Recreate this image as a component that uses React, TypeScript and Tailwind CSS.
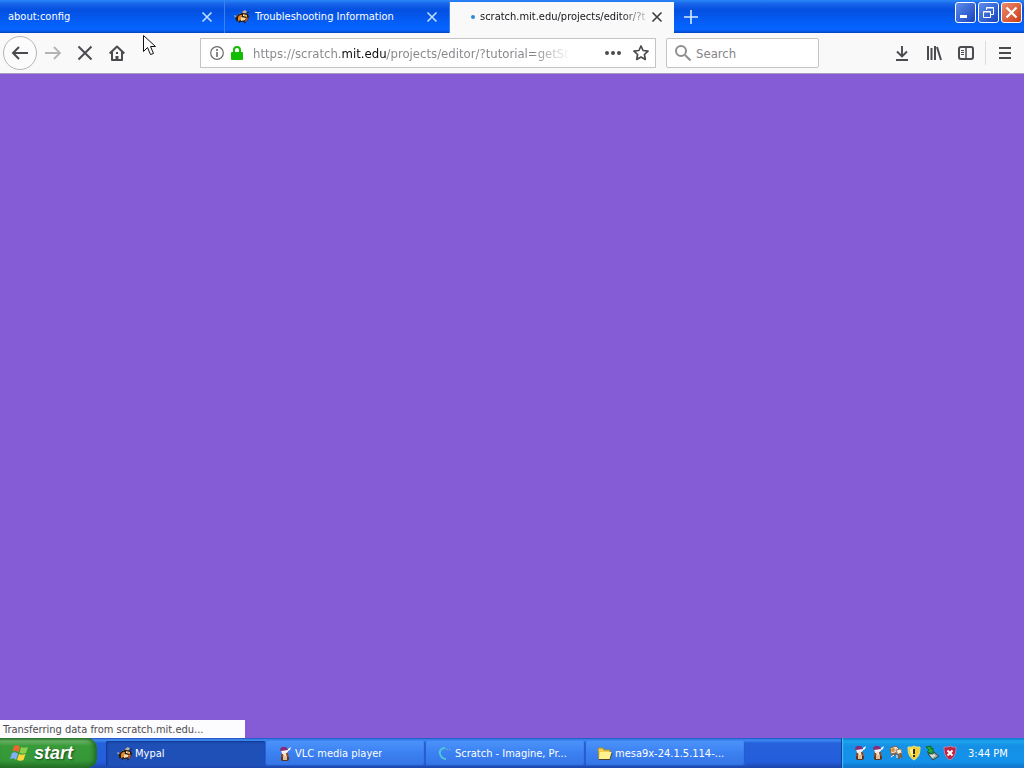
import React, { useState } from 'react'
import clsx from 'clsx'

interface Tab {
    id: string;
    title: string;
    icon?: 'bee' | 'loading';
}

interface Task {
    id: string;
    title: string;
    icon: React.ReactNode;
}

const BeeIcon = () => (
    <svg width="16" height="16" viewBox="0 0 16 16" className="shrink-0" aria-hidden="true">
        <path d="M0 6l3 1 3-3 3 3-4 3-4-1z" fill="#8fa6c0" />
        <path d="M8 3l3-2 2 2-3 2z" fill="#c7b493" />
        <path d="M1 9l4-4 4-1 5 1 1 3-2 4-5 1-5-1z" fill="#2b1a0c" />
        <path d="M4 8l2-2h2l-1 5-3 1z" fill="#e0862a" />
        <path d="M9 5l4 1v2l-4-1z" fill="#f0b062" />
        <path d="M7 8l5 1-1 2-4 1z" fill="#f7dfb0" />
        <path d="M12 8l2 1-1 3-2 1z" fill="#c0501c" />
        <path d="M2 12l2-1M5 14l1-2M10 14l2-1M13 4l2-1" stroke="#20180f" />
        <path d="M9 6h1v1H9z" fill="#fff" />
    </svg>
)

const VlcIcon = () => (
    <svg width="16" height="16" viewBox="0 0 16 16" className="shrink-0" aria-hidden="true">
        <path d="M5 6h5l1 5H5z" fill="#f3e6d4" />
        <path d="M4 8h2l1 3-3 3zM9 7h2l1 6-2 1z" fill="#8d4a22" />
        <path d="M4 11h8v3l-2 1H5l-1-1z" fill="#5c361e" />
        <path d="M6 10h4v4H6z" fill="#e0bf9c" />
        <path d="M3 3l2-2h4l2 3-7 2z" fill="#8a2a72" />
        <path d="M4 5l7-1v2l-6 1z" fill="#f7f3fa" />
        <path d="M11 3l3-2-1 3-2 1z" fill="#fff" />
    </svg>
)

const ScratchIcon = () => (
    <svg width="16" height="16" viewBox="0 0 16 16" className="shrink-0" fill="none" aria-hidden="true">
        <path d="M8 2C4 2 2 5 3 8c1 3 3 5 6 5" stroke="#4fc6d8" strokeWidth="2" />
        <path d="M8 2l3 2M12 3l2 1" stroke="#62a8d8" />
    </svg>
)

const FolderIcon = () => (
    <svg width="16" height="16" viewBox="0 0 16 16" className="shrink-0" aria-hidden="true">
        <path d="M1 3l1-1h4l1 2h6v9H2z" fill="#f0cf52" stroke="#a88c2a" />
        <path d="M3 6h12l-2 7H2z" fill="#fdf28f" />
        <path d="M2 13.500h11l2-7" stroke="#4c452c" fill="none" />
    </svg>
)

const KeysIcon = () => (
    <svg width="16" height="16" viewBox="0 0 16 16" className="shrink-0" aria-hidden="true">
        <path d="M2 3l6-2 3 3-2 4-6 1z" fill="#e6dcc4" stroke="#75664b" />
        <circle cx="5" cy="5" r="2" fill="#d98e3b" />
        <path d="M8 5l5-1 1 4-4 2z" fill="#f2efe5" stroke="#97836a" />
        <path d="M4 11l4-3M10 9l1 5M12 8l2 5" stroke="#8a5a34" strokeWidth="2" />
        <path d="M3 12l3-2M9 10v3" stroke="#fff" />
    </svg>
)

const UpdateShieldIcon = () => (
    <svg width="16" height="16" viewBox="0 0 16 16" className="shrink-0" aria-hidden="true">
        <path d="M8 1l2 1h4c0 6-1 10-6 13C3 12 2 8 2 2h4z" fill="#f6d02a" stroke="#e6e08e" />
        <path d="M4 4l3-1v9C5 10 4 8 4 4z" fill="#fff08b" />
        <path d="M7 4h2v5H7zM7 10h2v2H7z" fill="#2d2a16" />
    </svg>
)

const DeviceIcon = () => (
    <svg width="16" height="16" viewBox="0 0 16 16" className="shrink-0" aria-hidden="true">
        <path d="M4 9l6-2 5 4-6 4z" fill="#8e9c98" stroke="#344645" />
        <path d="M6 10l4-1 2 2-4 2z" fill="#d4dedb" />
        <path d="M2 2l5-1v3l2-1v6L3 7l2-2z" fill="#22a83c" stroke="#126928" />
    </svg>
)

const AlertShieldIcon = () => (
    <svg width="16" height="16" viewBox="0 0 16 16" className="shrink-0" aria-hidden="true">
        <path d="M8 1l2 1h4c0 6-1 10-6 13C3 12 2 8 2 2h4z" fill="#c2213f" stroke="#b08ab0" />
        <path d="M5.500 5.500l5 5M10.500 5.500l-5 5" stroke="#fff" strokeWidth="2" />
    </svg>
)

const WindowsFlag = () => (
    <svg width="20" height="20" viewBox="0 0 20 20" className="shrink-0" aria-hidden="true">
        <path d="M4 3c2-1 4-1 6 1L8.500 9.500c-2-2-4-2-6-1z" fill="#f0642f" />
        <path d="M11 4c2 1 4 1 7 0l-2 6c-3 1-4 1-6.500 0z" fill="#8ad04c" />
        <path d="M2 10c2-1 4-1 6 1l-2 6c-2-2-3-2-6-1z" fill="#84aef8" />
        <path d="M9 11c2 1 4 1 6.500 0l-2 6c-2 1-4 1-6.500 0z" fill="#fdd63c" />
    </svg>
)

const CloseIcon = () => (
    <svg width="16" height="16" viewBox="0 0 16 16" fill="none" stroke="currentColor" strokeWidth="1.6" aria-hidden="true">
        <path d="M3.5 3.5l9 9M12.5 3.5l-9 9" />
    </svg>
)

const tabs: Tab[] = [
    { id: 'config', title: 'about:config' },
    { id: 'troubleshooting', title: 'Troubleshooting Information', icon: 'bee' },
    { id: 'scratch', title: 'scratch.mit.edu/projects/editor/?t', icon: 'loading' },
]

const tasks: Task[] = [
    { id: 'mypal', title: 'Mypal', icon: <BeeIcon /> },
    { id: 'vlc', title: 'VLC media player', icon: <VlcIcon /> },
    { id: 'scratch', title: 'Scratch - Imagine, Pr...', icon: <ScratchIcon /> },
    { id: 'mesa', title: 'mesa9x-24.1.5.114-...', icon: <FolderIcon /> },
]

const TabStrip = () => {
    const [active, setActive] = useState('scratch');

    return (
        <div className="flex h-[33px] bg-[linear-gradient(#2a86f8_0,#1763e8_4px,#0450e0_10px,#0560fb_24px,#0663ff_30px,#0344bd_33px)]">
            {tabs.map((tab) => (
                <div
                    key={tab.id}
                    className={clsx(
                        'flex min-w-0 items-center pt-px',
                        tab.id === active
                            ? 'mt-[2px] w-[224px] bg-[#f9f9fa] pr-[9px] pb-[2px] text-[#15141a]'
                            : 'w-[225px] border-r border-[#3b82ef] pr-[9px] text-white',
                    )}
                >
                    <button
                        type="button"
                        className={clsx('flex h-full min-w-0 grow items-center', tab.icon ? 'pl-[9px]' : 'pl-2', tab.icon === 'loading' ? 'gap-1' : 'gap-[5px]')}
                        onClick={() => setActive(tab.id)}
                    >
                        {tab.icon === 'bee' && <BeeIcon />}
                        {tab.icon === 'loading' && (
                            <span className="flex w-[17px] shrink-0 justify-end pr-px">
                                <span className="size-1 rounded-full bg-[#2c87d8]" />
                            </span>
                        )}
                        <span
                            className={clsx(
                                'min-w-0 overflow-hidden whitespace-nowrap',
                                tab.icon === 'loading' && 'mask-[linear-gradient(to_right,#000_85%,transparent_105%)]',
                            )}
                        >
                            {tab.title}
                        </span>
                    </button>
                    <button
                        type="button"
                        aria-label="Close tab"
                        className={clsx('shrink-0', tab.id === active ? 'text-[#3c3c40]' : 'text-[#bfe0ff]')}
                    >
                        <CloseIcon />
                    </button>
                </div>
            ))}
            <button type="button" aria-label="New tab" className="flex w-[34px] items-center justify-center text-[#d6ecff]">
                <svg width="16" height="16" viewBox="0 0 16 16" fill="none" stroke="currentColor" strokeWidth="1.6" aria-hidden="true">
                    <path d="M8 1v14M1 8h14" />
                </svg>
            </button>
            <div className="ml-auto flex gap-[2px] pt-[2px] pr-[2px]">
                <button type="button" aria-label="Minimize" className="size-[21px] rounded-[3px] border border-white bg-linear-to-br from-[#5f8cec] to-[#1642bd]">
                    <svg width="19" height="19" viewBox="0 0 19 19" aria-hidden="true">
                        <path d="M4 12h7v3H4z" fill="#fff" />
                    </svg>
                </button>
                <button type="button" aria-label="Restore" className="size-[21px] rounded-[3px] border border-white bg-linear-to-br from-[#5f8cec] to-[#1642bd]">
                    <svg width="19" height="19" viewBox="0 0 19 19" fill="none" stroke="#fff" aria-hidden="true">
                        <path d="M7.500 7V4.500H14.500V11.500H12M7 5h8" />
                        <path d="M4.500 8.500h7v6h-7zM4 9h8" />
                    </svg>
                </button>
                <button type="button" aria-label="Close" className="size-[21px] rounded-[3px] border border-white bg-linear-to-br from-[#ec8a6c] to-[#c93a10]">
                    <svg width="19" height="19" viewBox="0 0 19 19" fill="none" stroke="#fff" strokeWidth="2.200" aria-hidden="true">
                        <path d="M4.500 4.500l10 10M14.500 4.500l-10 10" />
                    </svg>
                </button>
            </div>
        </div>
    )
}

const NavBar = () => {
    const [url, setUrl] = useState('https://scratch.mit.edu/projects/editor/?tutorial=getStarted');
    const [query, setQuery] = useState('');

    return (
        <div className="flex h-[41px] items-center border-b border-[#a79dba] bg-[#f9f9fa] pr-[3px] pl-[3px] text-[#4a4a4f]">
            <button type="button" aria-label="Back" className="flex size-[34px] items-center justify-center rounded-full border border-[#b5b5b8] bg-[#fcfcfc]">
                <svg width="18" height="16" viewBox="0 0 18 16" fill="none" stroke="currentColor" strokeWidth="2" aria-hidden="true">
                    <path d="M17 8H2M8 2L2 8l6 6" />
                </svg>
            </button>
            <button type="button" aria-label="Forward" className="flex w-8 justify-center text-[#b4b4b6]">
                <svg width="18" height="16" viewBox="0 0 18 16" fill="none" stroke="currentColor" strokeWidth="1.800" aria-hidden="true">
                    <path d="M1 8h15M10 2l6 6-6 6" />
                </svg>
            </button>
            <button type="button" aria-label="Stop" className="flex w-8 justify-center">
                <svg width="16" height="16" viewBox="0 0 16 16" fill="none" stroke="currentColor" strokeWidth="2" aria-hidden="true">
                    <path d="M1.500 1.500l13 13M14.500 1.500l-13 13" />
                </svg>
            </button>
            <button type="button" aria-label="Home" className="flex w-8 justify-center">
                <svg width="16" height="16" viewBox="0 0 16 16" fill="none" stroke="currentColor" strokeWidth="2" aria-hidden="true">
                    <path d="M.7 8.500L8 1.500l7.300 7M3 7v8h10V7" strokeLinejoin="round" />
                    <path d="M8 15v-4" strokeWidth="3" />
                    <path d="M7 8h2" />
                </svg>
            </button>
            <div className="ml-[67px] flex h-[30px] min-w-0 grow items-center border border-[#c4c4c7] bg-white pr-[6px] pl-[9px]">
                <svg width="14" height="14" viewBox="0 0 14 14" className="shrink-0" fill="none" stroke="#6a6a6e" aria-hidden="true">
                    <circle cx="7" cy="7" r="6.300" strokeWidth="1.200" />
                    <path d="M7 6v5M7 3v2" strokeWidth="1.600" />
                </svg>
                <svg width="12" height="14" viewBox="0 0 12 14" className="ml-[7px] shrink-0" aria-hidden="true">
                    <path d="M3 7V4a3 3 0 016 0v3" fill="none" stroke="#12bc00" strokeWidth="2" />
                    <rect y="6" width="12" height="8" rx="1" fill="#12bc00" />
                </svg>
                <input
                    type="text"
                    aria-label="Address"
                    className="ml-[10px] min-w-0 grow bg-[linear-gradient(to_right,#858589_88px,#0c0c0d_88px,#0c0c0d_134px,#858589_134px,#858589_280px,transparent_318px)] bg-clip-text pt-px text-[13px] text-transparent outline-none"
                    value={url}
                    onChange={(e) => setUrl(e.target.value)}
                />
                <button type="button" aria-label="Page actions" className="ml-[30px] shrink-0">
                    <svg width="16" height="16" viewBox="0 0 16 16" fill="currentColor" aria-hidden="true">
                        <circle cx="2" cy="8" r="2" />
                        <circle cx="8" cy="8" r="2" />
                        <circle cx="14" cy="8" r="2" />
                    </svg>
                </button>
                <button type="button" aria-label="Bookmark this page" className="ml-3 shrink-0">
                    <svg width="16" height="16" viewBox="0 0 16 16" fill="none" stroke="currentColor" strokeWidth="1.700" strokeLinejoin="round" aria-hidden="true">
                        <path d="M8 1l2.100 4.500 4.900.6-3.600 3.400.9 4.900L8 12l-4.300 2.400.9-4.900L1 6.100l4.900-.6z" />
                    </svg>
                </button>
            </div>
            <label className="ml-[10px] flex h-[30px] w-[153px] shrink-0 items-center gap-[5px] rounded-[2px] border border-[#c4c4c7] bg-white pl-2">
                <svg width="16" height="16" viewBox="0 0 16 16" className="shrink-0" fill="none" stroke="#8e8e91" strokeWidth="2" aria-hidden="true">
                    <circle cx="6" cy="6" r="5" />
                    <path d="M10 10l5.500 5.500" />
                </svg>
                <input
                    type="text"
                    aria-label="Search"
                    placeholder="Search"
                    className="min-w-0 grow pt-px text-[13px] outline-none placeholder:text-[#858589]"
                    value={query}
                    onChange={(e) => setQuery(e.target.value)}
                />
            </label>
            <button type="button" aria-label="Downloads" className="ml-[67px] flex w-8 shrink-0 justify-center">
                <svg width="16" height="16" viewBox="0 0 16 16" fill="none" stroke="currentColor" strokeWidth="1.900" aria-hidden="true">
                    <path d="M8 1v10M3 6.500l5 5 5-5M2 15h12" />
                </svg>
            </button>
            <button type="button" aria-label="Library" className="flex w-8 shrink-0 justify-center">
                <svg width="16" height="16" viewBox="0 0 16 16" fill="none" stroke="currentColor" strokeWidth="2" aria-hidden="true">
                    <path d="M2 1v14M5.500 3v12M9 1v14M11 2l4 13" />
                </svg>
            </button>
            <button type="button" aria-label="Sidebars" className="flex w-8 shrink-0 justify-center">
                <svg width="16" height="16" viewBox="0 0 16 16" fill="none" stroke="currentColor" aria-hidden="true">
                    <rect x="1" y="2" width="14" height="12" rx="2" strokeWidth="2" />
                    <path d="M8 2v12" strokeWidth="1.500" />
                    <path d="M3 5.500h3M3 7.500h3M3 9.500h3" />
                </svg>
            </button>
            <div className="ml-[3px] h-6 w-px shrink-0 bg-[#dcdcdf]" />
            <button type="button" aria-label="Menu" className="ml-[3px] flex w-8 shrink-0 justify-center">
                <svg width="12" height="12" viewBox="0 0 12 12" stroke="currentColor" strokeWidth="2" aria-hidden="true">
                    <path d="M0 1h12M0 6h12M0 11h12" />
                </svg>
            </button>
        </div>
    )
}

const Taskbar = () => {
    const [current, setCurrent] = useState('mypal');

    return (
        <div className="flex h-[30px] bg-[linear-gradient(#1f4fc0_0,#3f8cf3_2px,#2662db_5px,#245ddb_24px,#1b45a8_30px)] text-white">
            <button
                type="button"
                className="flex w-[97px] shrink-0 items-center gap-1 rounded-r-[10px] bg-[linear-gradient(#2d7a2e_0,#68b266_3px,#389a38_8px,#359838_22px,#246f26_30px)] pl-[10px] shadow-[inset_-3px_0_4px_#1f6b25]"
            >
                <WindowsFlag />
                <span className="font-['Liberation_Sans'] text-[18px] leading-5 font-bold italic [text-shadow:1px_1px_2px_#1b4a1b]">start</span>
            </button>
            <div className="ml-[9px] flex min-w-0 gap-px pt-[3px] pb-[2px]">
                {tasks.map((task) => (
                    <button
                        key={task.id}
                        type="button"
                        className={clsx(
                            'flex w-[159px] min-w-0 items-center gap-[2px] rounded-[2px] pl-[11px] text-left',
                            task.id === current
                                ? 'bg-[#1e50b8] shadow-[inset_1px_1px_2px_#12368c]'
                                : 'bg-linear-to-b from-[#4b93fa] via-[#3b80f1] to-[#3574e4] shadow-[inset_-1px_-1px_1px_#2458c8]',
                        )}
                        onClick={() => setCurrent(task.id)}
                    >
                        {task.icon}
                        <span className="truncate">{task.title}</span>
                    </button>
                ))}
            </div>
            <div className="ml-auto flex w-[183px] shrink-0 items-center gap-[2px] border-l border-[#0b3f9c] bg-[linear-gradient(#0d6fc9_0,#1ba4ee_3px,#1590e6_8px,#1391ea_24px,#0f6fc4_30px)] pl-[10px] shadow-[inset_1px_0_1px_#4bc0f8]">
                <VlcIcon />
                <VlcIcon />
                <KeysIcon />
                <UpdateShieldIcon />
                <DeviceIcon />
                <AlertShieldIcon />
                <time className="ml-2 pt-px whitespace-nowrap">3:44 PM</time>
            </div>
        </div>
    )
}

const App = () => {
    return (
        <div className="relative flex min-h-screen flex-col bg-[#855cd6] font-['DejaVu_Sans_Condensed','Noto_Sans',sans-serif] text-[11px] leading-4">
            <TabStrip />
            <NavBar />
            <main className="flex grow flex-col justify-end">
                <div role="status" className="h-[18px] w-[245px] bg-[#fcfbfd] pt-[2px] pl-[3px] text-[#4c4c50]">
                    Transferring data from scratch.mit.edu...
                </div>
            </main>
            <Taskbar />
            <svg width="14" height="22" viewBox="0 0 14 22" className="pointer-events-none absolute top-[35px] left-[143px]" aria-hidden="true">
                <path d="M.5.5v16l4-4 3 7 3-1-3-7h5z" fill="#fff" stroke="#111" />
            </svg>
        </div>
    )
}

export default App
